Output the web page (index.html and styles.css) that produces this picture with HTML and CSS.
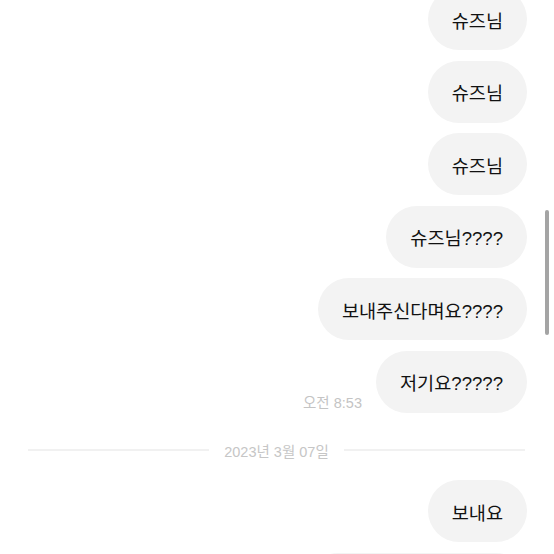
FILE: index.html
```html
<!DOCTYPE html>
<html lang="ko">
<head>
<meta charset="utf-8">
<link rel="stylesheet" href="styles.css">
</head>
<body>
<div class="screen">
  <div class="chat">
    <div class="row"><div class="bubble">슈즈님</div></div>
    <div class="row"><div class="bubble">슈즈님</div></div>
    <div class="row"><div class="bubble">슈즈님</div></div>
    <div class="row"><div class="bubble">슈즈님????</div></div>
    <div class="row"><div class="bubble">보내주신다며요????</div></div>
    <div class="row"><span class="time">오전 8:53</span><div class="bubble">저기요?????</div></div>
    <div class="divider"><span class="line"></span><span class="date">2023년 3월 07일</span><span class="line"></span></div>
    <div class="row"><div class="bubble">보내요</div></div>
    <div class="row"><div class="bubble bubble-next" aria-hidden="true"></div></div>
  </div>
  <div class="scrollbar"></div>
</div>
</body>
</html>
```

FILE: styles.css
```css
html, body {
  margin: 0;
  padding: 0;
  background: #ffffff;
}
.screen {
  position: relative;
  width: 554px;
  height: 554px;
  overflow: hidden;
  font-family: "Liberation Sans", "Noto Sans CJK KR", sans-serif;
}
.chat {
  display: flex;
  flex-direction: column;
  align-items: flex-end;
  gap: 10.5px;
  margin-top: -12px;
  padding: 0 27px 0 28px;
}
.row {
  display: flex;
  align-items: flex-end;
  gap: 14px;
}
.bubble {
  height: 62px;
  display: flex;
  align-items: center;
  padding: 0 24px;
  border-radius: 31px;
  background: #f3f3f3;
  color: #111111;
  font-size: 18.6px;
  white-space: nowrap;
}
.bubble-next {
  width: 172px;
}
.time {
  font-size: 14.5px;
  color: #c4c4c4;
  line-height: 16px;
  padding-bottom: 2px;
}
.divider {
  align-self: stretch;
  display: flex;
  align-items: center;
  gap: 15px;
  height: 20px;
  margin: 17px 2px 9.5px 0;
}
.line {
  flex: 1;
  height: 2px;
  background: #f1f1f1;
}
.date {
  font-size: 14.5px;
  color: #c6c6c6;
}
.scrollbar {
  position: absolute;
  left: 545px;
  top: 210px;
  width: 4px;
  height: 125px;
  border-radius: 2px;
  background: #a4a4a4;
}
```
